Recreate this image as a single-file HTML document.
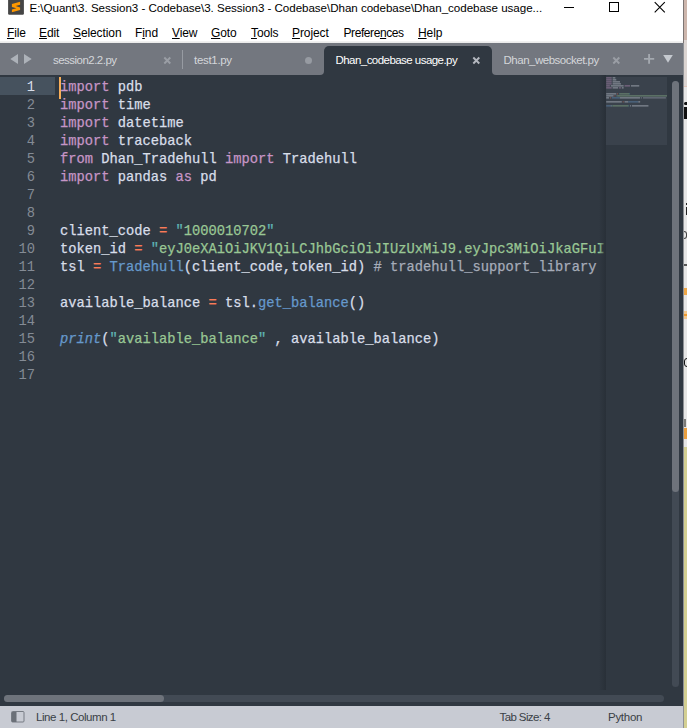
<!DOCTYPE html>
<html>
<head>
<meta charset="utf-8">
<style>
html,body{margin:0;padding:0;}
body{width:687px;height:728px;overflow:hidden;position:relative;background:#303841;font-family:"Liberation Sans",sans-serif;}
.abs{position:absolute;}
#title{left:0;top:0;width:683px;height:24px;background:#fff;}
#title .txt{left:29.500px;top:0.400px;font-size:11.600px;line-height:15px;color:#000;white-space:nowrap;letter-spacing:-0.040px;}
#menu{left:0;top:24px;width:683px;height:19px;background:#fff;}
#menu span{position:absolute;top:0;font-size:12px;line-height:18px;color:#000;white-space:nowrap;letter-spacing:-0.100px;}
#menu u{text-decoration:underline;text-underline-offset:1px;}
#menuline{left:0;top:41px;width:683px;height:2px;background:linear-gradient(#f4f4f4,#e9e9e9);}
#tabbar{left:0;top:43px;width:683px;height:32px;background:#73777f;}
.tab{position:absolute;top:3px;height:29px;}
.sep{position:absolute;top:7px;width:1px;height:19px;background:#979ba2;}
.tab .lbl{position:absolute;top:7px;font-size:11.500px;line-height:14px;color:#d3d6da;white-space:nowrap;}
#tabact{position:absolute;left:324px;top:3px;width:168px;height:29px;background:#303841;border-radius:5px 5px 0 0;}
#tabact .lbl{position:absolute;left:11.500px;top:7px;font-size:11.500px;line-height:14px;color:#fff;white-space:nowrap;letter-spacing:-0.545px;}
#editor{left:0;top:75px;width:683px;height:615px;background:#303841;}
#gutterhl{left:0;top:77px;width:55px;height:18px;background:#46525e;}
#cursor{left:59px;top:77px;width:2px;height:22px;background:#f9ae58;}
.ln{position:absolute;left:0;width:35px;text-align:right;font-family:"Liberation Mono",monospace;font-size:13.75px;line-height:18px;color:#848b95;}
.code{position:absolute;left:60px;font-family:"Liberation Mono",monospace;font-size:13.75px;line-height:18px;color:#d8dee9;white-space:pre;-webkit-text-stroke:0.250px;}
.k{color:#c695c6;}
.s{color:#99c794;}
.o{color:#f97b58;}
.f{color:#6699cc;}
.p{color:#6699cc;font-style:italic;}
.c{color:#a6acb9;}
.q{color:#5fb4b4;}
#codeclip{left:0;top:75px;width:605px;height:615px;overflow:hidden;}
#minimap{left:599px;top:75px;width:7px;height:616px;background:linear-gradient(to right,rgba(40,47,55,0),rgba(40,47,55,0.9));}
#minivp{left:606px;top:77px;width:61px;height:68px;background:#3a424c;}
#vscrolltrack{left:672px;top:81px;width:7px;height:606px;background:#424a54;border-radius:3.500px;}
#vscroll{left:672px;top:81px;width:7px;height:411px;background:#6e737b;border-radius:3.500px;}
#hscrolltrack{left:4px;top:695px;width:660px;height:7px;background:#424a54;border-radius:3.500px;}
#hscroll{left:4px;top:695px;width:160px;height:7px;background:#6e737b;border-radius:3.500px;}
#bottom{left:0;top:690px;width:683px;height:16px;background:#303841;}
#status{left:0;top:706px;width:683px;height:22px;background:#c8cbd3;}
#status span{position:absolute;top:4px;font-size:11.500px;line-height:14px;color:#3a3f46;white-space:nowrap;}
#right{left:683px;top:0;width:4px;height:728px;background:#ececec;overflow:hidden;}
</style>
</head>
<body>
<div id="title" class="abs">
  <svg class="abs" style="left:8px;top:0" width="17" height="16" viewBox="0 0 17 16"><rect x="0.100" y="-3" width="15.800" height="17.700" rx="1.200" fill="#454545"/><path d="M12.100 1.800 L12.100 4.800 L7.600 6.100 L12.100 7.400 L12.100 10.100 L3.900 12.300 L3.900 9.500 L8.400 8.200 L3.900 6.900 L3.900 4.100 Z" fill="#ff9800"/></svg>
  <div class="abs txt">E:\Quant\3. Session3 - Codebase\3. Session3 - Codebase\Dhan codebase\Dhan_codebase usage...</div>
  <svg class="abs" style="left:560px;top:0" width="121" height="24" viewBox="0 0 121 24">
    <path d="M4 7.500 H14" stroke="#000" stroke-width="1" fill="none"/>
    <rect x="49.500" y="2.500" width="9" height="9" stroke="#000" stroke-width="1" fill="none"/>
    <path d="M94.700 2.200 L104.800 12.300 M104.800 2.200 L94.700 12.300" stroke="#000" stroke-width="1.100" fill="none"/>
  </svg>
</div>
<div id="menu" class="abs">
  <span style="left:7px"><u>F</u>ile</span>
  <span style="left:39px"><u>E</u>dit</span>
  <span style="left:73px"><u>S</u>election</span>
  <span style="left:135px">F<u>i</u>nd</span>
  <span style="left:172px"><u>V</u>iew</span>
  <span style="left:211px"><u>G</u>oto</span>
  <span style="left:251px"><u>T</u>ools</span>
  <span style="left:292px"><u>P</u>roject</span>
  <span style="left:343.500px;letter-spacing:-0.420px">Prefere<u>n</u>ces</span>
  <span style="left:418px"><u>H</u>elp</span>
</div>
<div id="menuline" class="abs"></div>
<div id="tabbar" class="abs">
  <svg class="abs" style="left:8px;top:8px" width="26" height="16" viewBox="0 0 26 16"><path d="M2.300 8 L10 3 L10 13 Z M23.700 8 L16 3 L16 13 Z" fill="#adb2b9"/></svg>
  <div class="tab" style="left:40px;width:142px;"><div class="lbl" style="left:13px;letter-spacing:-0.525px">session2.2.py</div>
    <svg class="abs" style="left:122px;top:9px" width="10" height="11" viewBox="0 0 10 11"><path d="M2.300 2.500 L8.300 8.500 M8.300 2.500 L2.300 8.500" stroke="#9a9ea5" stroke-width="1.900"/></svg></div>
  <div class="sep" style="left:182px"></div>
  <div class="tab" style="left:183px;width:140px;"><div class="lbl" style="left:11px;letter-spacing:-0.310px">test1.py</div>
    <div class="abs" style="left:122px;top:11px;width:7px;height:7px;border-radius:3.500px;background:#979ba2"></div></div>
  <div class="abs" style="left:318px;top:26px;width:6px;height:6px;background:#303841"></div>
  <div class="abs" style="left:314px;top:22px;width:10px;height:10px;background:#73777f;border-radius:0 0 4px 0"></div>
  <div class="abs" style="left:492px;top:26px;width:6px;height:6px;background:#303841"></div>
  <div class="abs" style="left:492px;top:22px;width:10px;height:10px;background:#73777f;border-radius:0 0 0 4px"></div>
  <div id="tabact"><div class="lbl">Dhan_codebase usage.py</div>
    <svg class="abs" style="left:147px;top:9px" width="10" height="11" viewBox="0 0 10 11"><path d="M2.300 2.500 L8.300 8.500 M8.300 2.500 L2.300 8.500" stroke="#b4b8bf" stroke-width="1.900"/></svg></div>
  <div class="tab" style="left:493px;width:140px;"><div class="lbl" style="left:10.500px;letter-spacing:-0.490px">Dhan_websocket.py</div>
    <svg class="abs" style="left:118px;top:9px" width="10" height="11" viewBox="0 0 10 11"><path d="M2.300 2.500 L8.300 8.500 M8.300 2.500 L2.300 8.500" stroke="#9a9ea5" stroke-width="1.900"/></svg></div>
  <svg class="abs" style="left:640px;top:8px" width="40" height="16" viewBox="0 0 40 16"><path d="M4 7.900 H14.200 M9.100 3 V12.800" stroke="#a3a8af" stroke-width="1.900" fill="none"/><path d="M23.200 4.100 L32.800 4.100 L28 11.700 Z" fill="#c5c9cf"/></svg>
</div>
<div id="editor" class="abs"></div>
<div id="gutterhl" class="abs"></div>
<div id="codeclip" class="abs">
<div class="abs" style="left:0;top:4px;width:605px;height:611px;">
<div class="ln" style="top:0px;color:#d8dee9">1</div>
<div class="ln" style="top:18px">2</div>
<div class="ln" style="top:36px">3</div>
<div class="ln" style="top:54px">4</div>
<div class="ln" style="top:72px">5</div>
<div class="ln" style="top:90px">6</div>
<div class="ln" style="top:108px">7</div>
<div class="ln" style="top:126px">8</div>
<div class="ln" style="top:144px">9</div>
<div class="ln" style="top:162px">10</div>
<div class="ln" style="top:180px">11</div>
<div class="ln" style="top:198px">12</div>
<div class="ln" style="top:216px">13</div>
<div class="ln" style="top:234px">14</div>
<div class="ln" style="top:252px">15</div>
<div class="ln" style="top:270px">16</div>
<div class="ln" style="top:288px">17</div>
<div class="code" style="top:0px"><span class="k">import</span> pdb</div>
<div class="code" style="top:18px"><span class="k">import</span> time</div>
<div class="code" style="top:36px"><span class="k">import</span> datetime</div>
<div class="code" style="top:54px"><span class="k">import</span> traceback</div>
<div class="code" style="top:72px"><span class="k">from</span> Dhan_Tradehull <span class="k">import</span> Tradehull</div>
<div class="code" style="top:90px"><span class="k">import</span> pandas <span class="k">as</span> pd</div>
<div class="code" style="top:144px">client_code <span class="o">=</span> <span class="q">"</span><span class="s">1000010702</span><span class="q">"</span></div>
<div class="code" style="top:162px">token_id <span class="o">=</span> <span class="q">"</span><span class="s">eyJ0eXAiOiJKV1QiLCJhbGciOiJIUzUxMiJ9.eyJpc3MiOiJkaGFuIiwicGFydG5lcklkIjoiIiwiZXhwIjoxNz</span></div>
<div class="code" style="top:180px">tsl <span class="o">=</span> <span class="f">Tradehull</span>(client_code,token_id) <span class="c"># tradehull_support_library</span></div>
<div class="code" style="top:216px">available_balance <span class="o">=</span> tsl.<span class="f">get_balance</span>()</div>
<div class="code" style="top:252px"><span class="p">print</span>(<span class="q">"</span><span class="s">available_balance</span><span class="q">"</span> , available_balance)</div>
</div>
</div>
<div id="cursor" class="abs"></div>
<div id="minimap" class="abs"></div>
<div id="minivp" class="abs"></div>
<svg id="mm" class="abs" style="left:606px;top:77px;opacity:0.500" width="61" height="40" viewBox="0 0 61 40"><rect x="0.200" y="0.300" width="5.508" height="1.150" fill="#c695c6"/><rect x="6.626" y="0.300" width="2.754" height="1.150" fill="#d8dee9"/><rect x="0.200" y="2.300" width="5.508" height="1.150" fill="#c695c6"/><rect x="6.626" y="2.300" width="3.672" height="1.150" fill="#d8dee9"/><rect x="0.200" y="4.300" width="5.508" height="1.150" fill="#c695c6"/><rect x="6.626" y="4.300" width="7.344" height="1.150" fill="#d8dee9"/><rect x="0.200" y="6.300" width="5.508" height="1.150" fill="#c695c6"/><rect x="6.626" y="6.300" width="8.262" height="1.150" fill="#d8dee9"/><rect x="0.200" y="8.300" width="3.672" height="1.150" fill="#c695c6"/><rect x="4.790" y="8.300" width="12.852" height="1.150" fill="#d8dee9"/><rect x="18.560" y="8.300" width="5.508" height="1.150" fill="#c695c6"/><rect x="24.986" y="8.300" width="8.262" height="1.150" fill="#d8dee9"/><rect x="0.200" y="10.300" width="5.508" height="1.150" fill="#c695c6"/><rect x="6.626" y="10.300" width="5.508" height="1.150" fill="#d8dee9"/><rect x="13.052" y="10.300" width="1.836" height="1.150" fill="#c695c6"/><rect x="15.806" y="10.300" width="1.836" height="1.150" fill="#d8dee9"/><rect x="0.200" y="16.300" width="10.098" height="1.150" fill="#d8dee9"/><rect x="11.216" y="16.300" width="0.918" height="1.150" fill="#f97b58"/><rect x="13.052" y="16.300" width="0.918" height="1.150" fill="#5fb4b4"/><rect x="13.970" y="16.300" width="9.180" height="1.150" fill="#99c794"/><rect x="23.150" y="16.300" width="0.918" height="1.150" fill="#5fb4b4"/><rect x="0.200" y="18.300" width="7.344" height="1.150" fill="#d8dee9"/><rect x="8.462" y="18.300" width="0.918" height="1.150" fill="#f97b58"/><rect x="10.298" y="18.300" width="0.918" height="1.150" fill="#5fb4b4"/><rect x="11.216" y="18.300" width="49.784" height="1.150" fill="#99c794"/><rect x="0.200" y="20.300" width="2.754" height="1.150" fill="#d8dee9"/><rect x="3.872" y="20.300" width="0.918" height="1.150" fill="#f97b58"/><rect x="5.708" y="20.300" width="8.262" height="1.150" fill="#6699cc"/><rect x="13.970" y="20.300" width="20.196" height="1.150" fill="#d8dee9"/><rect x="35.084" y="20.300" width="0.918" height="1.150" fill="#a6acb9"/><rect x="36.920" y="20.300" width="22.950" height="1.150" fill="#a6acb9"/><rect x="0.200" y="24.300" width="15.606" height="1.150" fill="#d8dee9"/><rect x="16.724" y="24.300" width="0.918" height="1.150" fill="#f97b58"/><rect x="18.560" y="24.300" width="3.672" height="1.150" fill="#d8dee9"/><rect x="22.232" y="24.300" width="10.098" height="1.150" fill="#6699cc"/><rect x="32.330" y="24.300" width="1.836" height="1.150" fill="#d8dee9"/><rect x="0.200" y="28.300" width="4.590" height="1.150" fill="#6699cc"/><rect x="4.790" y="28.300" width="0.918" height="1.150" fill="#d8dee9"/><rect x="5.708" y="28.300" width="0.918" height="1.150" fill="#5fb4b4"/><rect x="6.626" y="28.300" width="15.606" height="1.150" fill="#99c794"/><rect x="22.232" y="28.300" width="0.918" height="1.150" fill="#5fb4b4"/><rect x="24.068" y="28.300" width="0.918" height="1.150" fill="#d8dee9"/><rect x="25.904" y="28.300" width="16.524" height="1.150" fill="#d8dee9"/></svg>
<div id="vscrolltrack" class="abs"></div>
<div id="vscroll" class="abs"></div>
<div id="bottom" class="abs"></div>
<div id="hscrolltrack" class="abs"></div>
<div id="hscroll" class="abs"></div>
<div id="status" class="abs">
  <svg class="abs" style="left:11px;top:5px" width="14" height="12" viewBox="0 0 14 12"><rect x="0.500" y="0.500" width="12.500" height="10.500" rx="1" fill="none" stroke="#767b83" stroke-width="1"/><rect x="1" y="1" width="4.500" height="10" fill="#6b7078"/></svg>
  <span style="left:36px;letter-spacing:-0.447px">Line 1, Column 1</span>
  <span style="left:499.500px;letter-spacing:-0.600px">Tab Size: 4</span>
  <span style="left:608px;letter-spacing:-0.280px">Python</span>
</div>
<div id="right" class="abs">
  <div class="abs" style="left:0;top:0;width:1px;height:43px;background:#7d7675"></div>
  <div class="abs" style="left:0;top:43px;width:1px;height:685px;background:#8e9196"></div>
  <div class="abs" style="left:1px;top:0;width:3px;height:40px;background:#cdb6ac"></div>
  <div class="abs" style="left:1px;top:40px;width:3px;height:46px;background:#dcd5d2"></div>
  <div class="abs" style="left:1px;top:86px;width:3px;height:1px;background:#e3c4b8"></div>
  <div class="abs" style="left:1px;top:87px;width:3px;height:341px;background:#e6e6e6"></div>
  <div class="abs" style="left:1px;top:102px;width:3px;height:3px;background:#111;border-radius:1.500px 0 0 1.500px"></div>
  <div class="abs" style="left:1px;top:107px;width:3px;height:12px;background:#111"></div>
  <div class="abs" style="left:2.500px;top:203px;width:1.500px;height:2px;background:#222"></div>
  <div class="abs" style="left:2.500px;top:207px;width:1.500px;height:8px;background:#222"></div>
  <div class="abs" style="left:1px;top:231px;width:2.500px;height:8px;border:1px solid #444;border-left:none;border-radius:0 3px 3px 0;box-sizing:border-box"></div>
  <div class="abs" style="left:1px;top:264px;width:3px;height:1.500px;background:#555"></div>
  <div class="abs" style="left:1px;top:288px;width:3px;height:7px;background:#f0a848"></div>
  <div class="abs" style="left:1px;top:311px;width:3px;height:8px;background:#f3c88e"></div>
  <div class="abs" style="left:1px;top:314px;width:3px;height:2px;background:#ee9a30"></div>
  <div class="abs" style="left:0.500px;top:357.500px;width:6px;height:9.500px;border:1.300px solid #111;border-radius:5px;box-sizing:border-box"></div>
  <div class="abs" style="left:1px;top:419px;width:2px;height:8px;background:#7a7a78"></div>
  <div class="abs" style="left:1px;top:428px;width:3px;height:11px;background:#eaa040"></div>
  <div class="abs" style="left:1px;top:439px;width:3px;height:8px;background:#e6e6e6"></div>
  <div class="abs" style="left:1px;top:447px;width:3px;height:281px;background:#d3cf92"></div>
</div>
</body>
</html>
